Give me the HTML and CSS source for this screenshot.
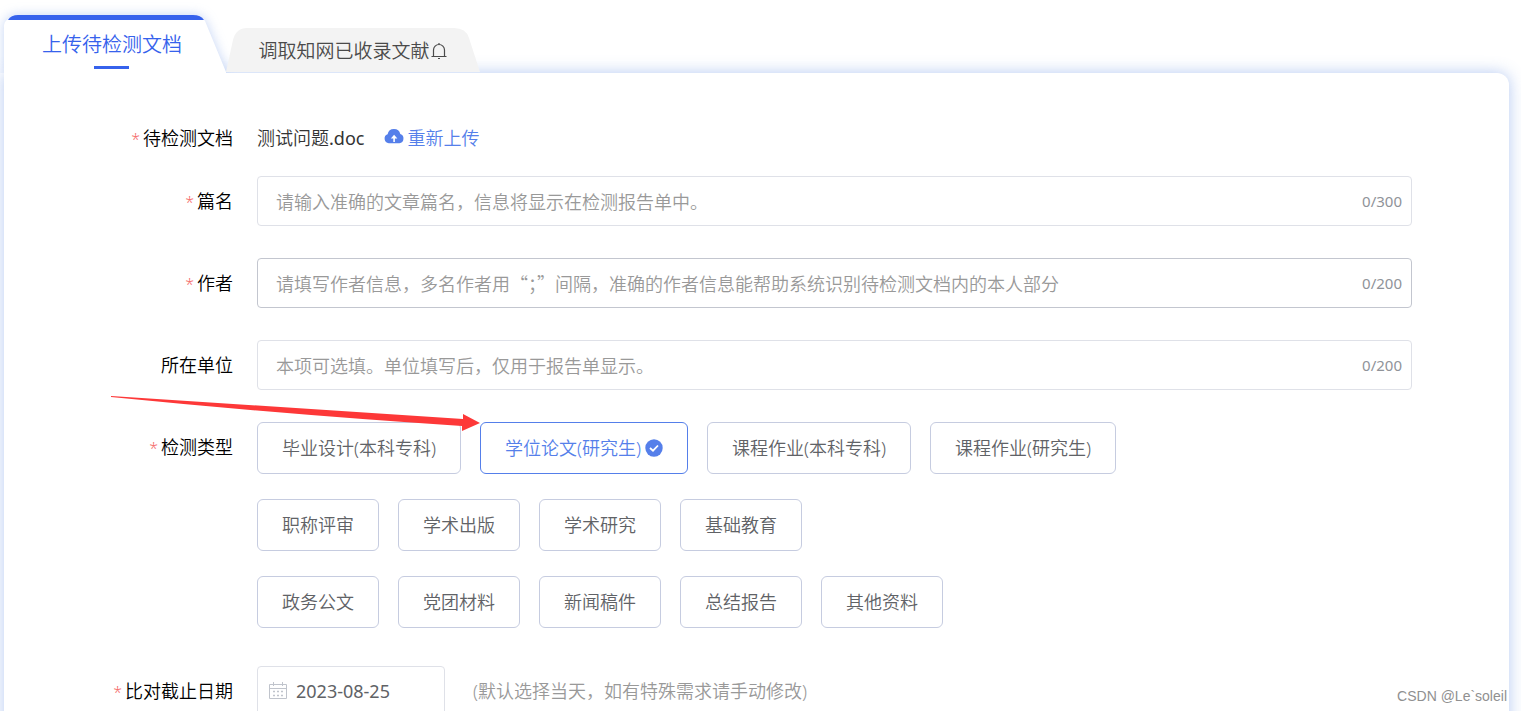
FILE: index.html
```html
<!DOCTYPE html>
<html lang="zh-CN">
<head>
<meta charset="utf-8">
<title>上传待检测文档</title>
<link rel="stylesheet" href="styles.css">
</head>
<body>
<main class="page">
  <div class="tabs" role="tablist">
    <button class="tab tab-active" type="button" role="tab" aria-selected="true">
      <svg class="tab-shape" viewBox="0 0 222 58" preserveAspectRatio="none" aria-hidden="true">
        <path d="M0 58V10Q1 5 5 4L10 0H191Q198 1 201 6L222 57V58Z" fill="#fff"/>
        <path d="M4 5Q7 0 14 0H189Q197 0 200 5Z" fill="#3662ec"/>
      </svg>
      <span class="tab-text">上传待检测文档</span>
    </button>
    <button class="tab tab-other" type="button" role="tab" aria-selected="false">
      <svg class="tab-shape" viewBox="0 0 254 44" preserveAspectRatio="none" aria-hidden="true">
        <path d="M0 44L7 12Q10 0 21 0H228Q240 0 243 10L254 44Z" fill="#f3f3f3"/>
      </svg>
      <span class="tab-text">调取知网已收录文献</span>
      <svg class="bell" viewBox="0 0 18 18" aria-hidden="true"><path d="M1.500 14.500H16.500M3.500 14.500V8a5.500 5.500 0 0 1 11 0V14.500M9 2.500V1M8 16.500H10" fill="none" stroke="#4a4a4a" stroke-width="1.200"/></svg>
    </button>
  </div>
  <form class="panel">
    <div class="row row-file">
      <span class="label required">待检测文档</span>
      <div class="file">
        <span class="file-name">测试问题<span class="latin">.doc</span></span>
        <a class="upload" href="#">
          <svg class="cloud" viewBox="0 0 20 16" aria-hidden="true"><path d="M4.800 15.200A4.600 4.600 0 0 1 3.600 6.300A6.500 6.500 0 0 1 16.300 6.100A4.700 4.700 0 0 1 15.400 15.200Z" fill="#557fea"/><path d="M10.100 14V9" fill="none" stroke="#fff" stroke-width="1.600"/><path d="M6.800 10.600L10.100 6.800L13.400 10.600Z" fill="#fff"/></svg>
          <span>重新上传</span>
        </a>
      </div>
    </div>
    <div class="row">
      <label class="label required" for="title">篇名</label>
      <div class="field"><input id="title" type="text" placeholder="请输入准确的文章篇名，信息将显示在检测报告单中。"><span class="count">0/300</span></div>
    </div>
    <div class="row">
      <label class="label required" for="author">作者</label>
      <div class="field field-hover"><input id="author" type="text" placeholder="请填写作者信息，多名作者用“；”间隔，准确的作者信息能帮助系统识别待检测文档内的本人部分"><span class="count">0/200</span></div>
    </div>
    <div class="row">
      <label class="label" for="unit">所在单位</label>
      <div class="field"><input id="unit" type="text" placeholder="本项可选填。单位填写后，仅用于报告单显示。"><span class="count">0/200</span></div>
    </div>
    <div class="row row-types">
      <span class="label required" id="type-label">检测类型</span>
      <div class="types" role="group" aria-labelledby="type-label">
        <div class="type-line">
          <button class="type" type="button">毕业设计(本科专科)</button>
          <button class="type type-selected" type="button" aria-pressed="true">学位论文(研究生)<svg class="check" viewBox="0 0 18 18" aria-hidden="true"><circle cx="9" cy="9" r="8.700" fill="#557fea"/><path d="M5 9L8 11.700L13 6.500" fill="none" stroke="#fff" stroke-width="1.800"/></svg></button>
          <button class="type" type="button">课程作业(本科专科)</button>
          <button class="type" type="button">课程作业(研究生)</button>
        </div>
        <div class="type-line">
          <button class="type" type="button">职称评审</button>
          <button class="type" type="button">学术出版</button>
          <button class="type" type="button">学术研究</button>
          <button class="type" type="button">基础教育</button>
        </div>
        <div class="type-line">
          <button class="type" type="button">政务公文</button>
          <button class="type" type="button">党团材料</button>
          <button class="type" type="button">新闻稿件</button>
          <button class="type" type="button">总结报告</button>
          <button class="type" type="button">其他资料</button>
        </div>
      </div>
    </div>
    <div class="row row-date">
      <label class="label required" for="date">比对截止日期</label>
      <div class="date-line">
        <div class="date">
          <svg class="calendar" viewBox="0 0 18 18" aria-hidden="true"><path d="M.500 2.500H17.500V16.500H.500ZM.500 6.500H17.500M4.500 0V4M13.500 0V4" fill="none" stroke="#c0c4cc"/><path d="M4 9.500H6M8 9.500H10M12 9.500H14M4 13.500H6M8 13.500H10M12 13.500H14" stroke="#c0c4cc" stroke-width="1.500"/></svg>
          <input class="latin" id="date" type="text" value="2023-08-25">
        </div>
        <span class="hint">(默认选择当天，如有特殊需求请手动修改)</span>
      </div>
    </div>
  </form>
  <svg class="arrow" viewBox="0 0 370 38" aria-hidden="true"><path d="M0 0L352 23V18L369 27L351 35V30Q180 19 0 1Z" fill="#fd3838"/></svg>
  <span class="watermark">CSDN @Le`soleil</span>
</main>
</body>
</html>
```
FILE: styles.css
```css
* {
  box-sizing: border-box;
}

body {
  margin: 0;
  background: #fff;
  color: #000;
  font: 350 18px/26px "Noto Sans", "Noto Sans CJK SC", sans-serif;
}

button,
input {
  font: inherit;
}

.page {
  position: relative;
  height: 100vh;
  overflow: hidden;
  padding: 15px 12px 0 4px;
}

.tabs {
  position: relative;
  z-index: 1;
  display: flex;
  align-items: flex-end;
}

.tab {
  position: relative;
  display: flex;
  justify-content: center;
  align-items: center;
  border: 0;
  padding: 2px 0 0;
  background: none;
}

.tab-shape {
  position: absolute;
  inset: 0;
  width: 100%;
  height: 100%;
  overflow: visible;
}

.tab-active {
  width: 222px;
  height: 58px;
  padding-right: 6px;
  color: #3662ec;
  font-size: 20px;
}

.tab-active .tab-shape {
  filter: drop-shadow(0 0 6px rgba(90, 135, 225, 0.35));
  clip-path: inset(-15px -20px 0 -15px);
}

.tab-active .tab-text::after {
  content: "";
  position: absolute;
  left: 90px;
  bottom: 4px;
  width: 35px;
  height: 3px;
  background: #3662ec;
}

.tab-active .tab-text {
  z-index: 1;
}

.tab-other {
  width: 254px;
  height: 44px;
  margin-bottom: 1px;
  color: #4a4a4a;
  font-size: 19px;
}

.tab-other .tab-text {
  position: relative;
}

.bell {
  position: relative;
  width: 18px;
  height: 18px;
}

.panel {
  min-height: 100vh;
  padding: 46px 97px 40px 0;
  border-radius: 0 12px 0 0;
  background: #fff;
  box-shadow: 0 0 16px rgba(90, 135, 225, 0.45);
}

.row {
  display: grid;
  grid-template-columns: 229px 1fr;
  column-gap: 24px;
  align-items: center;
  margin-bottom: 32px;
}

.row-file {
  min-height: 38px;
  margin-bottom: 19px;
}

.row-types {
  align-items: start;
  margin-bottom: 38px;
}

.row-types .label {
  padding-top: 12px;
}

.label {
  text-align: right;
}

.required::before {
  content: "*";
  margin-right: 3px;
  color: #f56c6c;
  font-size: 16px;
}

.latin {
  font-family: "Noto Sans", sans-serif;
  font-weight: 400;
}

.file {
  display: flex;
  align-items: center;
  gap: 20px;
  color: #333;
}

.upload {
  display: flex;
  align-items: center;
  gap: 3px;
  color: #557fea;
  text-decoration: none;
}

.cloud {
  width: 20px;
  height: 16px;
  margin-bottom: 4px;
}

.field,
.date {
  display: flex;
  align-items: center;
  height: 50px;
  border: 1px solid #dfe1e8;
  border-radius: 4px;
}

.field {
  padding: 0 9px 0 18px;
}

.field-hover {
  border-color: #c3c6cf;
}

input {
  flex: 1;
  min-width: 0;
  padding: 0;
  border: 0;
  outline: 0;
  background: none;
  color: #606266;
}

.field input {
  font-family: "Noto Sans CJK SC", sans-serif;
}

input::placeholder {
  color: #999;
  opacity: 1;
}

.count {
  color: #909399;
  font-size: 15px;
  font-weight: 400;
}

.types {
  display: grid;
  gap: 25px;
}

.type-line {
  display: flex;
  gap: 19px;
}

.type {
  display: flex;
  align-items: center;
  gap: 4px;
  height: 52px;
  padding: 0 24px;
  border: 1px solid #c6cce0;
  border-radius: 6px;
  background: #fff;
  color: #606266;
}

.type-selected {
  border-color: #557fea;
  color: #557fea;
}

.check {
  width: 18px;
  height: 18px;
}

.date-line {
  display: flex;
  align-items: center;
  gap: 28px;
}

.date {
  width: 188px;
  gap: 9px;
  padding: 0 11px;
}

.calendar {
  width: 18px;
  height: 18px;
}

.hint {
  color: #999;
}

.arrow {
  position: absolute;
  z-index: 2;
  left: 111px;
  top: 396px;
  width: 370px;
  height: 38px;
}

.watermark {
  position: absolute;
  right: 14px;
  bottom: 4px;
  color: #909090;
  font: 14px/22px "Liberation Sans", sans-serif;
}
```
